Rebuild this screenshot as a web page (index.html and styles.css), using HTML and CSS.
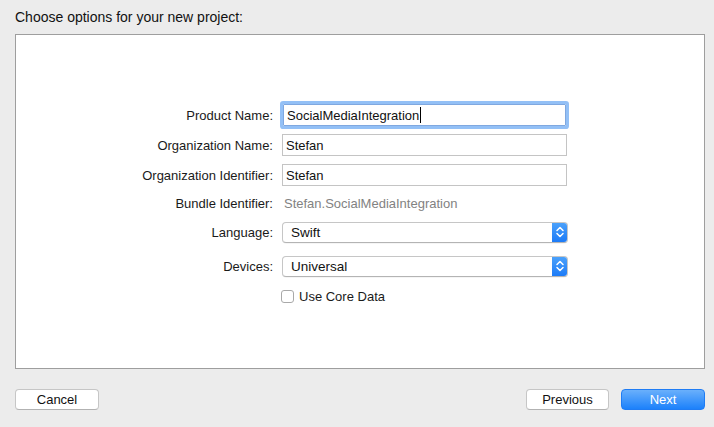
FILE: index.html
```html
<!DOCTYPE html>
<html>
<head>
<meta charset="utf-8">
<link rel="stylesheet" href="styles.css">
</head>
<body>
<div class="sheet">
  <div class="title">Choose options for your new project:</div>
  <div class="panel">
    <div class="form">
      <div class="row r1">
        <div class="label">Product Name:</div>
        <div class="field focus"><span>SocialMediaIntegration</span><span class="caret"></span></div>
      </div>
      <div class="row r2">
        <div class="label">Organization Name:</div>
        <div class="field">Stefan</div>
      </div>
      <div class="row r3">
        <div class="label">Organization Identifier:</div>
        <div class="field">Stefan</div>
      </div>
      <div class="row r4">
        <div class="label">Bundle Identifier:</div>
        <div class="static">Stefan.SocialMediaIntegration</div>
      </div>
      <div class="row r5">
        <div class="label">Language:</div>
        <div class="popup"><span class="ptext">Swift</span>
          <span class="stepper"><svg width="16" height="20" viewBox="0 0 16 20"><path d="M5 8.5 L8 5.5 L11 8.5" fill="none" stroke="#fff" stroke-width="1.5" stroke-linecap="round" stroke-linejoin="round"/><path d="M5 11.5 L8 14.5 L11 11.5" fill="none" stroke="#fff" stroke-width="1.5" stroke-linecap="round" stroke-linejoin="round"/></svg></span>
        </div>
      </div>
      <div class="row r6">
        <div class="label">Devices:</div>
        <div class="popup"><span class="ptext">Universal</span>
          <span class="stepper"><svg width="16" height="20" viewBox="0 0 16 20"><path d="M5 8.5 L8 5.5 L11 8.5" fill="none" stroke="#fff" stroke-width="1.5" stroke-linecap="round" stroke-linejoin="round"/><path d="M5 11.5 L8 14.5 L11 11.5" fill="none" stroke="#fff" stroke-width="1.5" stroke-linecap="round" stroke-linejoin="round"/></svg></span>
        </div>
      </div>
      <div class="row r7">
        <div class="label"></div>
        <div class="check"><span class="box"></span><span>Use Core Data</span></div>
      </div>
    </div>
  </div>
  <div class="buttons">
    <div class="btn cancel">Cancel</div>
    <div class="spacer"></div>
    <div class="btn prev">Previous</div>
    <div class="btn next">Next</div>
  </div>
</div>
</body>
</html>
```
FILE: styles.css
```css
html, body {
  margin: 0;
  padding: 0;
  background: #ececec;
  font-family: "Liberation Sans", Arial, sans-serif;
  font-size: 13px;
  color: #1a1a1a;
}
.sheet {
  width: 714px;
  height: 427px;
  padding: 0 9px 0 15px;
  box-sizing: border-box;
  display: flex;
  flex-direction: column;
}
.title {
  height: 34px;
  box-sizing: border-box;
  line-height: 35px;
  font-size: 14px;
  color: #111;
}
.panel {
  height: 335px;
  box-sizing: border-box;
  background: #fff;
  border: 1px solid #9e9e9e;
}
.form {
  display: flex;
  flex-direction: column;
  padding-top: 69px;
}
.row {
  display: flex;
  align-items: center;
}
.label {
  width: 257px;
  text-align: right;
  padding-right: 9px;
  box-sizing: content-box;
  flex: none;
  color: #1a1a1a;
}
.r1 { height: 22px; }
.r2 { height: 22px; margin-top: 8px; }
.r3 { height: 22px; margin-top: 8px; }
.r4 { height: 20px; margin-top: 7px; }
.r5 { height: 20px; margin-top: 9px; }
.r6 { height: 20px; margin-top: 14px; }
.r7 { height: 18px; margin-top: 11px; }
.field {
  width: 285px;
  height: 22px;
  box-sizing: border-box;
  border: 1px solid #c4c4c4;
  padding: 0 3px;
  display: flex;
  align-items: center;
  color: #111;
}
.field.focus {
  margin-left: 1px;
  width: 283px;
  border: 1px solid #7fa8e0;
  box-shadow: 0 0 0 3px #93c0f6;
  border-radius: 1px;
}
.caret {
  display: inline-block;
  width: 1px;
  height: 16px;
  background: #000;
  margin-left: 1px;
}
.static {
  color: #828282;
  padding-left: 2px;
}
.popup {
  width: 286px;
  height: 21px;
  box-sizing: border-box;
  border: 1px solid #c6c6c6;
  border-bottom-color: #b4b4b4;
  border-radius: 4px;
  display: flex;
  align-items: center;
  justify-content: space-between;
  background: #fff;
  overflow: hidden;
  box-shadow: 0 0.5px 0.5px rgba(0,0,0,0.08);
}
.ptext {
  padding-left: 8px;
  font-size: 13.5px;
  color: #111;
}
.stepper {
  width: 16px;
  height: 21px;
  margin-top: -1px;
  margin-bottom: -1px;
  margin-right: -1px;
  background: linear-gradient(#4da3fb, #1a79f7);
  border-radius: 0 4px 4px 0;
  display: flex;
  align-items: center;
  justify-content: center;
}
.check {
  display: flex;
  align-items: center;
  gap: 5px;
  color: #1a1a1a;
}
.box {
  width: 13px;
  height: 13px;
  box-sizing: border-box;
  border: 1px solid #a9a9a9;
  border-radius: 3px;
  background: #fff;
  margin-left: -1px;
}
.buttons {
  display: flex;
  margin-top: 20px;
  height: 21px;
}
.spacer { flex: 1; }
.btn {
  height: 21px;
  box-sizing: border-box;
  border: 1px solid #c6c6c6;
  border-bottom-color: #b2b2b2;
  border-radius: 4px;
  background: #fff;
  display: flex;
  align-items: center;
  justify-content: center;
  font-size: 13px;
  color: #111;
}
.cancel { width: 84px; }
.prev { width: 83px; margin-right: 12px; }
.next {
  width: 84px;
  border: 1px solid #1f7cf4;
  background: linear-gradient(#6ab0fb, #1c81fb);
  color: #fff;
}
```
